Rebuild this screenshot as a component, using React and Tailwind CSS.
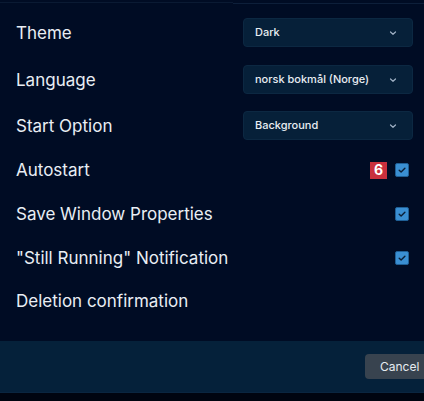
import React from "react";

const Chevron = () => (
  <svg width="10" height="10" viewBox="0 0 10 10" fill="none" className="shrink-0">
    <path d="M2.5 4 L5 6.3 L7.5 4" stroke="#9fb0c4" strokeWidth="1.2" strokeLinecap="round" strokeLinejoin="round" />
  </svg>
);

const Select = ({ value }) => (
  <div className="flex h-[29px] w-[170px] items-center justify-between rounded-[4px] border border-[#0c2842] bg-[#062039] pl-[11px] pr-[14px] text-[11px] font-medium text-[#e8edf3]">
    <span>{value}</span>
    <Chevron />
  </div>
);

const Check = () => (
  <div className="flex h-[14px] w-[14px] items-center justify-center rounded-[2px] border border-[#1f5f95] bg-[#3a8fd2]">
    <svg width="10" height="10" viewBox="0 0 10 10" fill="none">
      <path d="M2.2 5.2 L4.1 7 L7.9 3.2" stroke="#0b1f36" strokeWidth="1.4" strokeLinecap="round" strokeLinejoin="round" />
    </svg>
  </div>
);

const Label = ({ children }) => <span className="pt-[2px] text-[17px]">{children}</span>;

export default function App() {
  return (
    <div
      className="relative flex h-[401px] w-[424px] flex-col overflow-hidden bg-[#000c24] text-[#e9eef4]"
      style={{ fontFamily: "Inter, 'Noto Sans', sans-serif" }}
    >
      <div className="flex h-[3px] w-full">
        <div className="h-[1px] w-[233px] mt-[2px] bg-[#0a1a33]" />
        <div className="h-[1px] flex-1 mt-[3px] bg-[#0d1f3a]" />
      </div>
      <div className="flex flex-col pl-[16px] pr-[11px] pt-[15px]">
        <div className="flex h-[29px] items-center justify-between">
          <Label>Theme</Label>
          <Select value="Dark" />
        </div>
        <div className="mt-[18px] flex h-[29px] items-center justify-between">
          <Label>Language</Label>
          <Select value="norsk bokmål (Norge)" />
        </div>
        <div className="mt-[17px] flex h-[29px] items-center justify-between">
          <Label>Start Option</Label>
          <Select value="Background" />
        </div>
        <div className="mt-[8px] flex h-[44px] items-center justify-between pr-[4px]">
          <Label>Autostart</Label>
          <div className="flex items-center gap-[8px]">
            <div className="flex h-[17px] w-[17px] items-center justify-center bg-[#c9303d] text-[14px] font-bold leading-none text-white">6</div>
            <Check />
          </div>
        </div>
        <div className="flex h-[44px] items-center justify-between pr-[4px]">
          <Label>Save Window Properties</Label>
          <Check />
        </div>
        <div className="flex h-[43px] items-center justify-between pr-[4px]">
          <Label>"Still Running" Notification</Label>
          <Check />
        </div>
        <div className="flex h-[43px] items-center">
          <Label>Deletion confirmation</Label>
        </div>
      </div>
      <div className="mt-auto flex h-[52px] items-center justify-end border-b border-[#0a2640] bg-[#05213a] pr-0">
        <div className="mr-[-6px] flex h-[25px] w-[65px] items-center rounded-[4px] bg-[#38434f] pl-[15px] text-[12px] text-[#e6ebf0]">
          Cancel
        </div>
      </div>
      <div className="h-[8px] bg-[#000510]" />
    </div>
  );
}
